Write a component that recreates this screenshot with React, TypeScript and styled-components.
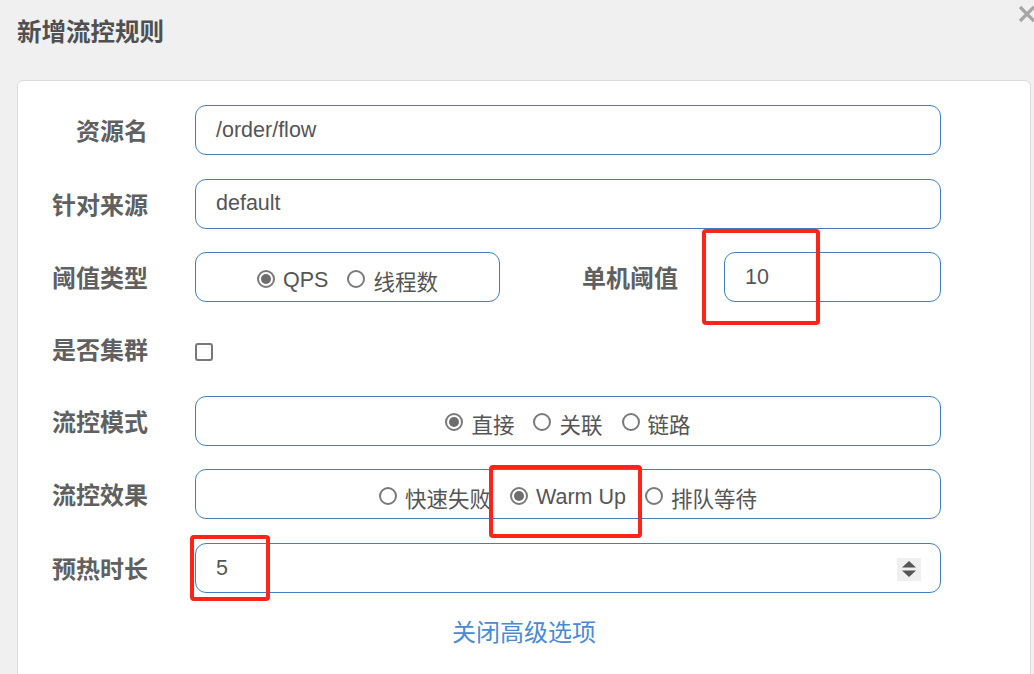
import React from "react";
import styled, { createGlobalStyle } from "styled-components";

const GlobalStyle = createGlobalStyle`
  html, body { margin: 0; padding: 0; }
  body {
    background: #f0f0f0;
    font-family: "Liberation Sans", "Noto Sans CJK SC", sans-serif;
    overflow: hidden;
  }
`;

const Page = styled.div`
  position: relative;
  width: 1034px;
  height: 674px;
  overflow: hidden;
  background: #f0f0f0;
`;

const Header = styled.div`
  height: 80px;
  display: flex;
  align-items: flex-start;
  padding-left: 17px;
  box-sizing: border-box;
`;

const Title = styled.h4`
  margin: 15px 0 0 0;
  font-family: "Noto Sans CJK SC", sans-serif;
  font-weight: 700;
  font-size: 24.5px;
  line-height: 32px;
  color: #505050;
`;

const Close = styled.div`
  position: absolute;
  top: 4px;
  right: -3px;
  width: 20px;
  height: 20px;
`;

const Card = styled.div`
  margin-left: 17px;
  width: 1014px;
  height: 620px;
  box-sizing: border-box;
  background: #fff;
  border: 1px solid #dcdcdc;
  border-radius: 6px;
  padding-top: 24px;
`;

const Form = styled.div`
  display: flex;
  flex-direction: column;
  gap: 23.6px;
`;

const Row = styled.div<{ $h?: number }>`
  display: grid;
  grid-template-columns: 130px 746px;
  column-gap: 47px;
  align-items: center;
  height: ${(p) => p.$h ?? 50}px;
`;

const Label = styled.div`
  text-align: right;
  font-family: "Noto Sans CJK SC", sans-serif;
  font-weight: 700;
  font-size: 24px;
  color: #606060;
  line-height: 30px;
`;

const Field = styled.div<{ $w?: number }>`
  box-sizing: border-box;
  height: 50px;
  width: ${(p) => (p.$w ? `${p.$w}px` : "100%")};
  border: 1px solid #3f7fbf;
  border-radius: 11px;
  padding: 0 19px 0 20px;
  display: flex;
  align-items: center;
  font-size: 21.5px;
  color: #555;
`;

const RadioBox = styled(Field)`
  justify-content: center;
  gap: 19px;
  padding: 6px 0 0 0;
`;

const RadioItem = styled.label`
  display: inline-flex;
  align-items: center;
  gap: 8px;
  font-size: 21.5px;
  color: #555;
  white-space: nowrap;
`;

const RadioDot = styled.span<{ $checked?: boolean }>`
  position: relative;
  flex-shrink: 0;
  width: 18px;
  height: 18px;
  box-sizing: border-box;
  border-radius: 50%;
  border: 2px solid #7a7a7a;
  background: #fff;
  margin-top: -3px;
  &::after {
    content: "";
    display: ${(p) => (p.$checked ? "block" : "none")};
    position: absolute;
    left: 50%;
    top: 50%;
    width: 10px;
    height: 10px;
    border-radius: 50%;
    background: #6e6e6e;
    transform: translate(-50%, -50%);
  }
`;

const SplitField = styled.div`
  display: flex;
  align-items: center;
`;

const SubLabel = styled(Label)`
  flex: 1;
  margin-right: 46px;
`;

const Checkbox = styled.span`
  display: block;
  width: 18px;
  height: 18px;
  box-sizing: border-box;
  border: 2px solid #787878;
  border-radius: 3px;
  margin-top: 6px;
`;

const NumberField = styled(Field)`
  justify-content: space-between;
`;

const Spinner = styled.div`
  width: 24px;
  height: 23px;
  background: #efefef;
  display: flex;
  align-items: center;
  justify-content: center;
  margin-top: 2px;
`;

const LinkRow = styled.div`
  margin-top: 23px;
  text-align: center;
`;

const Link = styled.a`
  font-family: "Noto Sans CJK SC", sans-serif;
  font-size: 24px;
  color: #4a8ad3;
  text-decoration: none;
  line-height: 30px;
`;

const Mark = styled.div`
  position: absolute;
  box-sizing: border-box;
  border: 4px solid #ff2318;
  border-radius: 4px;
`;

const Radio = ({ label, checked }: { label: string; checked?: boolean }) => (
  <RadioItem>
    <RadioDot $checked={checked} />
    {label}
  </RadioItem>
);

export default function App() {
  return (
    <Page>
      <GlobalStyle />
      <Header>
        <Title>新增流控规则</Title>
      </Header>
      <Close>
        <svg width="20" height="20" viewBox="0 0 20 20">
          <path d="M3 3 L17 17 M17 3 L3 17" stroke="#a6a6a6" strokeWidth="3.2" />
        </svg>
      </Close>
      <Card>
        <Form>
          <Row>
            <Label>资源名</Label>
            <Field>/order/flow</Field>
          </Row>
          <Row>
            <Label>针对来源</Label>
            <Field>default</Field>
          </Row>
          <Row>
            <Label>阈值类型</Label>
            <SplitField>
              <RadioBox $w={305}>
                <Radio label="QPS" checked />
                <Radio label="线程数" />
              </RadioBox>
              <SubLabel>单机阈值</SubLabel>
              <Field $w={217}>10</Field>
            </SplitField>
          </Row>
          <Row $h={46.5}>
            <Label>是否集群</Label>
            <Checkbox />
          </Row>
          <Row>
            <Label>流控模式</Label>
            <RadioBox>
              <Radio label="直接" checked />
              <Radio label="关联" />
              <Radio label="链路" />
            </RadioBox>
          </Row>
          <Row>
            <Label>流控效果</Label>
            <RadioBox>
              <Radio label="快速失败" />
              <Radio label="Warm Up" checked />
              <Radio label="排队等待" />
            </RadioBox>
          </Row>
          <Row>
            <Label>预热时长</Label>
            <NumberField>
              <span>5</span>
              <Spinner>
                <svg width="14" height="18" viewBox="0 0 14 18">
                  <path d="M7 1 L14 7.5 L0 7.5 Z M0 10.5 L14 10.5 L7 17 Z" fill="#555" />
                </svg>
              </Spinner>
            </NumberField>
          </Row>
        </Form>
        <LinkRow>
          <Link href="#">关闭高级选项</Link>
        </LinkRow>
      </Card>
      <Mark style={{ left: 702, top: 229, width: 118, height: 96 }} />
      <Mark style={{ left: 489, top: 465, width: 153, height: 73 }} />
      <Mark style={{ left: 190, top: 535, width: 80, height: 66 }} />
    </Page>
  );
}
